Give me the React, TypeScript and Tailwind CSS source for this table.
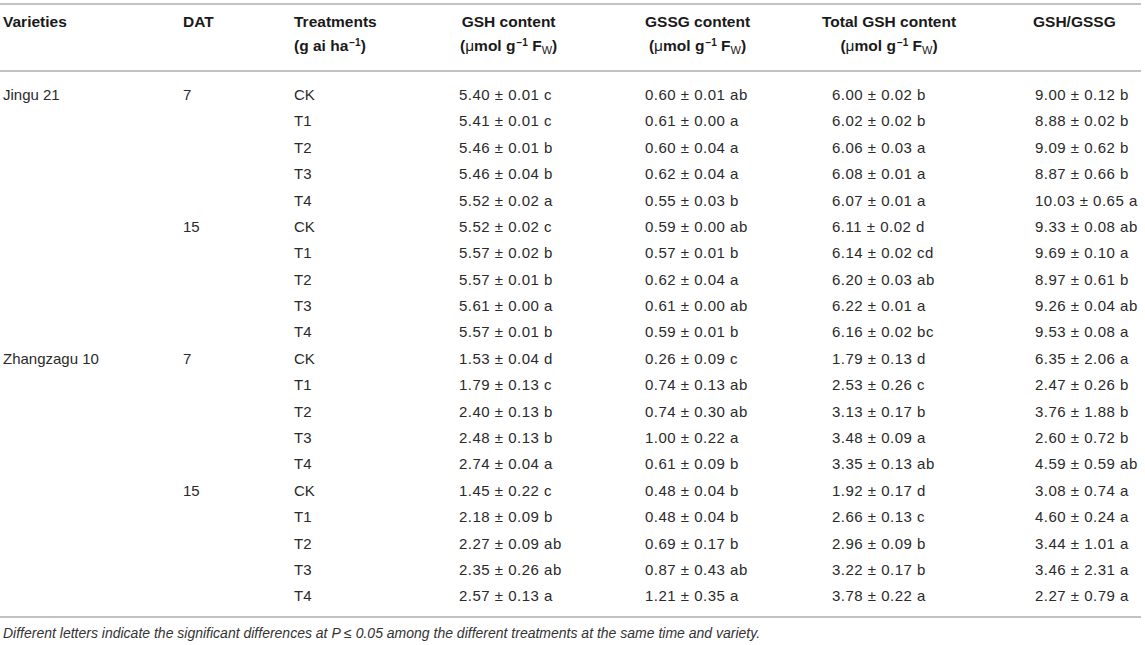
import React from "react";

type Row = { v?: string; d?: string; t: string; c: [string, string, string, string] };

const rows: Row[] = [
  { v: "Jingu 21", d: "7", t: "CK", c: ["5.40 ± 0.01 c", "0.60 ± 0.01 ab", "6.00 ± 0.02 b", "9.00 ± 0.12 b"] },
  { t: "T1", c: ["5.41 ± 0.01 c", "0.61 ± 0.00 a", "6.02 ± 0.02 b", "8.88 ± 0.02 b"] },
  { t: "T2", c: ["5.46 ± 0.01 b", "0.60 ± 0.04 a", "6.06 ± 0.03 a", "9.09 ± 0.62 b"] },
  { t: "T3", c: ["5.46 ± 0.04 b", "0.62 ± 0.04 a", "6.08 ± 0.01 a", "8.87 ± 0.66 b"] },
  { t: "T4", c: ["5.52 ± 0.02 a", "0.55 ± 0.03 b", "6.07 ± 0.01 a", "10.03 ± 0.65 a"] },
  { d: "15", t: "CK", c: ["5.52 ± 0.02 c", "0.59 ± 0.00 ab", "6.11 ± 0.02 d", "9.33 ± 0.08 ab"] },
  { t: "T1", c: ["5.57 ± 0.02 b", "0.57 ± 0.01 b", "6.14 ± 0.02 cd", "9.69 ± 0.10 a"] },
  { t: "T2", c: ["5.57 ± 0.01 b", "0.62 ± 0.04 a", "6.20 ± 0.03 ab", "8.97 ± 0.61 b"] },
  { t: "T3", c: ["5.61 ± 0.00 a", "0.61 ± 0.00 ab", "6.22 ± 0.01 a", "9.26 ± 0.04 ab"] },
  { t: "T4", c: ["5.57 ± 0.01 b", "0.59 ± 0.01 b", "6.16 ± 0.02 bc", "9.53 ± 0.08 a"] },
  { v: "Zhangzagu 10", d: "7", t: "CK", c: ["1.53 ± 0.04 d", "0.26 ± 0.09 c", "1.79 ± 0.13 d", "6.35 ± 2.06 a"] },
  { t: "T1", c: ["1.79 ± 0.13 c", "0.74 ± 0.13 ab", "2.53 ± 0.26 c", "2.47 ± 0.26 b"] },
  { t: "T2", c: ["2.40 ± 0.13 b", "0.74 ± 0.30 ab", "3.13 ± 0.17 b", "3.76 ± 1.88 b"] },
  { t: "T3", c: ["2.48 ± 0.13 b", "1.00 ± 0.22 a", "3.48 ± 0.09 a", "2.60 ± 0.72 b"] },
  { t: "T4", c: ["2.74 ± 0.04 a", "0.61 ± 0.09 b", "3.35 ± 0.13 ab", "4.59 ± 0.59 ab"] },
  { d: "15", t: "CK", c: ["1.45 ± 0.22 c", "0.48 ± 0.04 b", "1.92 ± 0.17 d", "3.08 ± 0.74 a"] },
  { t: "T1", c: ["2.18 ± 0.09 b", "0.48 ± 0.04 b", "2.66 ± 0.13 c", "4.60 ± 0.24 a"] },
  { t: "T2", c: ["2.27 ± 0.09 ab", "0.69 ± 0.17 b", "2.96 ± 0.09 b", "3.44 ± 1.01 a"] },
  { t: "T3", c: ["2.35 ± 0.26 ab", "0.87 ± 0.43 ab", "3.22 ± 0.17 b", "3.46 ± 2.31 a"] },
  { t: "T4", c: ["2.57 ± 0.13 a", "1.21 ± 0.35 a", "3.78 ± 0.22 a", "2.27 ± 0.79 a"] },
];

const grid = "grid grid-cols-[180px_111px_165px_186px_187px_203px_1fr]";

function Unit() {
  return (
    <span>
      (<span className="font-normal">μ</span>mol g<sup className="text-[10px] ml-[1px]">−1</sup>{" "}F
      <sub className="text-[11px] font-normal">W</sub>)
    </span>
  );
}

function Head({ a, b, cls }: { a: string; b?: React.ReactNode; cls?: string }) {
  return (
    <div className={"flex " + (cls ?? "")}>
      <div className="inline-flex flex-col items-center">
        <div className="h-[24px] leading-[24px]">{a}</div>
        {b ? <div className="h-[24px] leading-[24px] whitespace-nowrap">{b}</div> : null}
      </div>
    </div>
  );
}

export default function App() {
  return (
    <div
      className="w-[1145px] h-[645px] bg-white text-[#222] overflow-hidden"
      style={{ fontFamily: '"Liberation Sans", Arial, sans-serif' }}
    >
      <div className="pt-[3px] mr-[4px]">
        <div className="border-t-2 border-b-2 border-[#c2c2c2]">
          <div className={grid + " pl-[3px] pt-[5px] pb-[12px] text-[15.5px] font-bold text-[#1a1a1a]"}>
            <Head a="Varieties" />
            <Head a="DAT" />
            <div className="flex flex-col">
              <div className="h-[24px] leading-[24px]">Treatments</div>
              <div className="h-[24px] leading-[24px]">
                (g ai ha<sup className="text-[10px] ml-[1px]">−1</sup>)
              </div>
            </div>
            <Head a="GSH content" b={<Unit />} cls="ml-[1px]" />
            <Head a="GSSG content" b={<Unit />} />
            <Head a="Total GSH content" b={<Unit />} cls="-ml-[10px]" />
            <Head a="GSH/GSSG" cls="-ml-[2px]" />
          </div>
        </div>
        <div className="border-b-2 border-[#c2c2c2] pt-[10px] pb-[6px] text-[15px] text-[#2a2a2a]">
          {rows.map((r, i) => (
            <div key={i} className={grid + " pl-[3px] h-[26.4px] items-center whitespace-nowrap"}>
              <div>{r.v ?? ""}</div>
              <div>{r.d ?? ""}</div>
              <div>{r.t}</div>
              {r.c.map((x, j) => (
                <div key={j} className="tracking-[0.5px]">{x}</div>
              ))}
            </div>
          ))}
        </div>
      </div>
      <div className="pl-[3px] pt-[7px] text-[14px] italic text-[#333] leading-[16px] whitespace-nowrap">
        Different letters indicate the significant differences at P ≤ 0.05 among the different treatments at the same
        time and variety.
      </div>
    </div>
  );
}
